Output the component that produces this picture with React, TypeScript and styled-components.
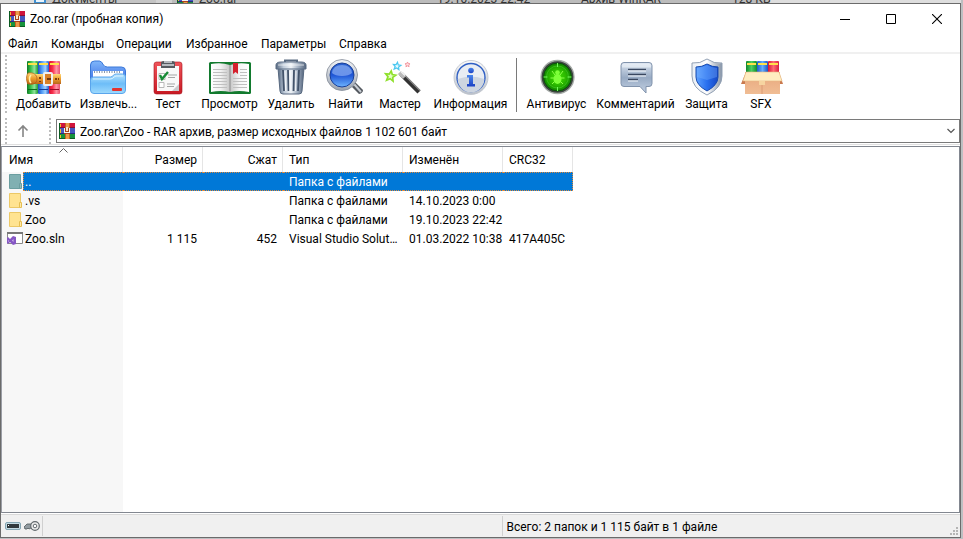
import React from "react";
import styled, { createGlobalStyle } from "styled-components";

const GlobalStyle = createGlobalStyle`
  *, *::before, *::after { box-sizing: border-box; }
  body { margin: 0; }
  body, button, select { font-family: Roboto, "Noto Sans", sans-serif; font-size: 12px; color: #000; }
  button { border: 0; padding: 0; background: transparent; }
  svg { display: block; flex: none; }
`;

const Desktop = styled.div`
  height: 100vh;
  display: flex;
  flex-direction: column;
  padding: 0 2px 1px 0;
  background: #bdbfc1;
`;

const BackStrip = styled.div`
  height: 3px;
  flex: none;
  overflow: hidden;
  display: flex;
  background: linear-gradient(90deg, #dedede 0 34px, #c4c4c4 34px 156px, #d2d2d2 156px 172px, #bcbcbc 172px 770px, #dedede 770px);
`;

const BackText = styled.span<{ $w: number; $pad?: number }>`
  width: ${(p) => p.$w}px;
  padding-left: ${(p) => p.$pad ?? 0}px;
  margin-top: -9px;
  line-height: 16px;
  flex: none;
  display: flex;
  gap: 6px;
  white-space: nowrap;
  color: #333;
`;

const Window = styled.main`
  flex: 1;
  min-height: 0;
  display: flex;
  flex-direction: column;
  border: 1px solid #6b6b6b;
  background: #fff;
`;

const TitleBar = styled.header`
  height: 29px;
  flex: none;
  display: flex;
  align-items: center;
  padding-left: 8px;
`;

const Title = styled.h1`
  flex: 1;
  margin: 0 0 0 5px;
  font-size: 12px;
  font-weight: 400;
`;

const CaptionButton = styled.button`
  width: 46px;
  height: 29px;
  display: flex;
  align-items: center;
  justify-content: center;
`;

const MenuBar = styled.nav`
  height: 21px;
  flex: none;
  display: flex;
  align-items: center;
  padding: 2px 0 0 1px;
  border-bottom: 2px solid #f0f0f0;
`;

const MenuItem = styled.button<{ $w: number }>`
  width: ${(p) => p.$w}px;
  padding-left: 6px;
  text-align: left;
  white-space: nowrap;
`;

const ToolBar = styled.div`
  height: 62px;
  flex: none;
  display: flex;
  align-items: center;
  padding-left: 4px;
`;

const Grip = styled.span<{ $h: number }>`
  width: 2px;
  height: ${(p) => p.$h}px;
  flex: none;
  background: repeating-linear-gradient(#bdbdbd 0 2px, transparent 2px 4px);
`;

const Tools = styled.div`
  display: flex;
  align-items: center;
  margin-left: 4px;
`;

const ToolButton = styled.button<{ $w: number }>`
  width: ${(p) => p.$w}px;
  flex: none;
  display: flex;
  flex-direction: column;
  align-items: center;
  line-height: 16px;
  white-space: nowrap;
`;

const Separator = styled.span`
  width: 1px;
  height: 54px;
  margin: 0 4px 0 2px;
  background: #7a7a7a;
`;

const AddressBar = styled.div`
  height: 29px;
  flex: none;
  display: flex;
  align-items: center;
  padding: 2px 0 0 4px;
  border-bottom: 1px solid #e0e0e0;
`;

const UpButton = styled.button`
  width: 42px;
  height: 24px;
  padding-left: 9px;
  display: flex;
  align-items: center;
`;

const AddressField = styled.label`
  flex: 1;
  height: 24px;
  margin-left: 5px;
  padding: 0 4px 0 2px;
  display: flex;
  align-items: center;
  border: 1px solid #7a7a7a;
`;

const AddressSelect = styled.select`
  flex: 1;
  min-width: 0;
  height: 20px;
  padding: 2px 0 0 5px;
  appearance: none;
  border: 0;
  outline: 0;
  background: transparent;
`;

const FileArea = styled.section`
  flex: 1;
  min-height: 0;
  margin-top: 1px;
  border: 1px solid #828790;
  border-left-color: #9b9ea6;
  background: linear-gradient(90deg, #f7f7f7 121px, #fff 121px);
`;

const Listing = styled.div`
  background: linear-gradient(#fff 25px, transparent 25px);
`;

const FileTable = styled.table`
  width: 571px;
  table-layout: fixed;
  border-collapse: separate;
  border-spacing: 0;
`;

const HeadCell = styled.th<{ $w: number; $right?: boolean }>`
  width: ${(p) => p.$w}px;
  height: 25px;
  padding: 0 5px 0 6px;
  position: relative;
  font-weight: 400;
  text-align: ${(p) => (p.$right ? "right" : "left")};
  border-right: 1px solid #e5e5e5;

  &:first-child { padding-left: 7px; }
`;

const SortMark = styled.svg`
  position: absolute;
  top: 1px;
  left: 57px;
`;

const selected = `
  color: #fff;
  background: #0078d7;
  border: 0 dotted #e08a3c;
  border-width: 1px 0;
  padding-top: 1px;
  padding-bottom: 0;
`;

const Cell = styled.td<{ $right?: boolean; $whole?: boolean; $sel?: boolean }>`
  height: 19px;
  padding: 2px ${(p) => (p.$whole ? 0 : p.$right ? 6 : 4)}px 1px 6px;
  line-height: 16px;
  overflow: ${(p) => (p.$whole ? "visible" : "hidden")};
  white-space: nowrap;
  text-overflow: ellipsis;
  text-align: ${(p) => (p.$right ? "right" : "left")};
  ${(p) => (p.$sel ? selected : "")}
  &:last-child { border-right-width: ${(p) => (p.$sel ? 1 : 0)}px; }
`;

const NameCell = styled.td`
  height: 19px;
  padding: 0;
`;

const NameBox = styled.div`
  display: flex;
  align-items: center;
  padding-left: 4px;
`;

const NameLabel = styled.span<{ $sel?: boolean }>`
  flex: 1;
  height: 19px;
  line-height: 16px;
  padding: 2px 0 1px 2px;
  ${(p) => (p.$sel ? selected + "border-left-width: 1px; padding-left: 1px;" : "")}
`;

const StatusBar = styled.footer`
  height: 24px;
  flex: none;
  display: flex;
  align-items: center;
  background: #f0f0f0;
  border-top: 1px solid #fff;
  box-shadow: inset 0 1px #d9d9d9;
`;

const StatusIcons = styled.div`
  width: 42px;
  height: 20px;
  display: flex;
  align-items: center;
  gap: 3px;
  padding-left: 4px;
  border-right: 1px solid #d0d0d0;
`;

const StatusPane = styled.div`
  flex: 1;
  height: 20px;
  line-height: 22px;
  padding-left: 5px;

  & + & { padding-left: 4px; border-left: 1px solid #d0d0d0; }
`;

const SizeGrip = styled.svg`
  align-self: flex-end;
  margin: 0 2px 2px -10px;
`;

function ArchiveMark() {
  return (
    <svg width="16" height="16" viewBox="0 0 16 16" aria-hidden="true">
      <path fill="#d0143c" d="M0 0h16v5H0z" />
      <path fill="#8a0d35" d="M0 4h16v1H0z" />
      <path fill="#4558c0" d="M0 5h16v6H0z" />
      <path fill="#2b2a80" d="M0 10h16v1H0z" />
      <path fill="#16933c" d="M0 11h16v5H0z" />
      <path fill="#0b5c22" d="M0 15h16v1H0zM0 0h1v16H0z" />
      <path fill="#f1c232" d="M1 1h1v3H1zM1 6h1v4H1zM1 12h1v3H1z" />
      <path fill="#c4641f" d="M6 0h5v16H6z" />
      <path fill="#eb9a4c" d="M7 0h3v16H7z" />
      <path fill="#a8431a" d="M5 5h6v6H5z" />
      <path fill="#f4f4f4" d="M5 5h1v5H5zM10 5h1v5h-1zM6 9h4v1H6z" />
      <path fill="#fbe6c8" d="M7 4h2v4H7z" />
    </svg>
  );
}

const Drawing = ({ children }: { children: React.ReactNode }) => (
  <svg width="48" height="38" viewBox="0 0 48 38" aria-hidden="true">
    {children}
  </svg>
);

type Stops = string[];
const Grad = ({ id, stops, down }: { id: string; stops: Stops; down?: boolean }) => (
  <linearGradient id={id} x1="0" y1="0" x2={down ? 0 : 1} y2={down ? 1 : 0}>
    {stops.map((c, i) => (
      <stop key={i} offset={i / (stops.length - 1)} stopColor={c} />
    ))}
  </linearGradient>
);

const AddIcon = () => (
  <Drawing>
    <defs>
      <Grad id="bkG" stops={["#0f7a25", "#35c04a", "#8fe39a", "#1d9a35"]} />
      <Grad id="bkB" stops={["#1c4fc0", "#4f9af5", "#9fd0ff", "#2458c8"]} />
      <Grad id="bkR" stops={["#d80f32", "#f8304c", "#ff96a8", "#e8506e"]} />
      <Grad id="belt" down stops={["#ffdb7c", "#ec9b2c", "#b8641a"]} />
    </defs>
    <rect x="7" y="3" width="11" height="33" rx="1" fill="url(#bkG)" />
    <rect x="18" y="3" width="11" height="33" rx="1" fill="url(#bkB)" />
    <rect x="29" y="3" width="11" height="33" rx="1" fill="url(#bkR)" />
    <path fill="#ffe14a" d="M8 5h9v2H8zM19 5h9v2h-9zM30 5h9v2h-9z" />
    <path fill="#0b6a1e" d="M8 31h9v1H8z" />
    <path fill="#153c9c" d="M19 31h9v1h-9z" />
    <path fill="#970a28" d="M30 31h9v1h-9z" />
    <path d="M7 16h34v10H7z" fill="url(#belt)" />
    <path d="M8 15c6-1 9 2 9 6s-3 6-9 5c-2-3-2-8 0-11z" fill="url(#belt)" stroke="#a85a12" strokeWidth=".7" />
    <path d="M11 17c-2 2-2 6 0 8" fill="none" stroke="#fff0a8" strokeWidth="1.600" />
    <rect x="24" y="15" width="8" height="12" rx="1" fill="#d98028" stroke="#efefef" strokeWidth="2" />
    <path d="M27 20h4v2h-4z" fill="#6d3410" />
    <path d="M19 19h2v2h-2zM19 23h2v1h-2zM35 20h2v2h-2zM38 20h1v2h-1z" fill="#7a3a10" />
  </Drawing>
);

const ExtractIcon = () => (
  <Drawing>
    <defs>
      <Grad id="fdA" down stops={["#7fb6fa", "#2d5ee0"]} />
      <Grad id="fdB" down stops={["#b4e2fe", "#6dbdf8", "#9edafd"]} />
    </defs>
    <path d="M5.500 7q0-4 4-4h5q2 0 4 4 1 2 4 2h14q4 0 4 4v16h-35z" fill="url(#fdA)" stroke="#3b78d8" />
    <path d="M8 13h30v9H8z" fill="#fff" />
    <path d="M9 14h27" stroke="#8a99ad" strokeWidth="2" strokeDasharray="1 1.5" />
    <path d="M5.500 22q0-3 3-3h17q2 0 3-2 1-1 3-1h6q3 0 3 3v13q0 3.500-3.500 3.500h-28q-3.500 0-3.500-3.500z" fill="url(#fdB)" stroke="#5aa5ec" />
    <path d="M8 21h17q3 0 4-2l2-1h7" stroke="#daf3ff" fill="none" />
    <rect x="27" y="30" width="10" height="3" rx="1" fill="#e5332e" />
  </Drawing>
);

const TestIcon = () => (
  <Drawing>
    <defs>
      <Grad id="cbA" down stops={["#f0545a", "#c81923"]} />
    </defs>
    <rect x="10" y="4" width="28" height="32" rx="2.500" fill="url(#cbA)" stroke="#a6121b" strokeWidth=".6" />
    <path d="M13 8h22v25H13z" fill="#f8f8f8" />
    <path d="M28 33l7-7v7z" fill="#c9c9cc" />
    <path d="M17 5q0-2 3-2h8q3 0 3 2v5H17z" fill="#555a60" />
    <path d="M18 7h12M20 4h8" stroke="#d6dade" strokeWidth="1.600" />
    <path d="M15 15.500h6v6h-6zM15 24.500h5v5h-5z" fill="#fff" stroke="#b8b8b8" />
    <path d="M16 17l2 4 6-7" fill="none" stroke="#168a35" strokeWidth="2.400" />
    <path d="M24 17h9M24 19.500h7M23 26h8M23 28.500h7" stroke="#a5a5a5" />
  </Drawing>
);

const ViewIcon = () => (
  <Drawing>
    <defs>
      <Grad id="pgL" stops={["#ffffff", "#f2f2f2", "#c6c6c6"]} />
      <Grad id="pgR" stops={["#c6c6c6", "#f6f6f6", "#ffffff"]} />
    </defs>
    <rect x="3" y="4" width="42" height="32" rx="1.500" fill="#127a2e" />
    <path d="M5 6q10-2 19 1v27q-9-2-19 0z" fill="url(#pgL)" />
    <path d="M43 6q-10-2-19 1v27q9-2 19 0z" fill="url(#pgR)" />
    <path d="M7 11.500h14M7 14.500h14M7 17.500h14M7 20.500h14M7 23.500h14M7 26.500h14M7 29.500h14M27 20.500h14M27 23.500h14M27 26.500h14M27 29.500h14M34 11.500h7M34 14.500h7M34 17.500h7" stroke="#c0c0c0" />
    <path d="M27 5h5v11l-2.500-2-2.500 2z" fill="#d5202c" />
    <path d="M24 7v27" stroke="#8c8c8c" />
  </Drawing>
);

const DeleteIcon = () => (
  <Drawing>
    <defs>
      <Grad id="trA" stops={["#55677f", "#c0ccda", "#f0f4f8", "#a0aec0", "#54647c"]} />
    </defs>
    <path d="M18 4V2.500h12V4" fill="none" stroke="#596a80" strokeWidth="2" />
    <path d="M11 10h26l-2 23q0 3-3 3H16q-3 0-3-3z" fill="url(#trA)" stroke="#586980" />
    <path d="M16 12l1 21M21 12l.5 21M27 12l-.5 21M32 12l-1 21" stroke="#43536a" strokeWidth="1.800" />
    <path d="M18 13l.7 20M23 13v20M29 13l-.5 20" stroke="#fff" strokeOpacity=".8" />
    <path d="M9 7q0-3 5-3h20q5 0 5 3v4H9z" fill="url(#trA)" stroke="#5a6c84" />
    <path d="M11 7h26" stroke="#fff" strokeOpacity=".7" />
  </Drawing>
);

const FindIcon = () => (
  <Drawing>
    <defs>
      <Grad id="lnA" down stops={["#2a62d0", "#1f55d5", "#6db4ff"]} />
      <Grad id="lnB" down stops={["#f2f4f7", "#9ca4b0"]} />
    </defs>
    <path d="M29 28l4-4 8 8q0 3-4 4z" fill="#53585f" />
    <path d="M30 28l2-2 7 8" stroke="#c9ced4" strokeWidth="2" fill="none" />
    <circle cx="20" cy="17" r="15.500" fill="url(#lnB)" stroke="#848c98" strokeWidth=".8" />
    <circle cx="20" cy="17" r="12" fill="url(#lnA)" stroke="#1a3f96" />
    <path d="M10 15q1-8 10-8t10 8q-3 3-10 3t-10-3z" fill="#b6d2ff" fillOpacity=".5" />
  </Drawing>
);

const star = "M0-6L1.800-2 6-1.800 2.800 1.200 3.800 5.500 0 3.200-3.800 5.500-2.800 1.200-6-1.800-1.800-2z";
const WizardIcon = () => (
  <Drawing>
    <path d="M25 16l18 18" stroke="#333" strokeWidth="4.500" />
    <path d="M26 14.500l18 18" stroke="#888" strokeWidth="1.500" />
    <path d="M23.500 14.500l5 5" stroke="#b9b9b9" strokeWidth="4.500" />
    <path d="M25 13.500l4 4" stroke="#f4f4f4" strokeWidth="1.500" />
    <path d={star} transform="translate(14.500 18) scale(.85) rotate(8)" fill="#e5ffc9" stroke="#8fe02c" strokeWidth="2" />
    <path d={star} transform="translate(21 8) scale(.62) rotate(8)" fill="#e8fbff" stroke="#4cc8f0" strokeWidth="2" />
    <path d={star} transform="translate(31.500 6.500) scale(.42)" fill="#ffe1e1" stroke="#f08a94" strokeWidth="2" />
  </Drawing>
);

const InfoIcon = () => (
  <Drawing>
    <defs>
      <Grad id="inA" down stops={["#fafafa", "#b9c0ca"]} />
      <Grad id="inB" down stops={["#4a86ec", "#1a40c4"]} />
    </defs>
    <circle cx="24" cy="19.500" r="17" fill="url(#inA)" stroke="#bcc2ca" strokeWidth=".8" />
    <circle cx="24" cy="19.500" r="14" fill="#e9edf3" stroke="#2f5fc4" strokeWidth="1.400" />
    <path d="M10.700 21a13.300 13.300 0 0 0 26.600 0q-13-5-26.600 0z" fill="#cdd5e0" />
    <circle cx="24" cy="12.500" r="2.800" fill="url(#inB)" />
    <path d="M20 17h6v9h2v2.500h-8V26h2v-6.500h-2z" fill="url(#inB)" />
  </Drawing>
);

const VirusIcon = () => (
  <Drawing>
    <defs>
      <radialGradient id="avA">
        <stop offset="0" stopColor="#3fe000" />
        <stop offset=".6" stopColor="#2bb800" />
        <stop offset="1" stopColor="#0f8400" />
      </radialGradient>
    </defs>
    <circle cx="24.500" cy="19" r="16.500" fill="#3d4440" stroke="#a6aba8" strokeWidth="1.300" />
    <circle cx="24.500" cy="19" r="14" fill="url(#avA)" stroke="#0b4f0c" />
    <circle cx="24.500" cy="19" r="11" fill="none" stroke="#56e43c" strokeWidth=".6" strokeOpacity=".7" />
    <path d="M24.500 5v4M24.500 29v4M10.500 19h4M34.500 19h4" stroke="#75f859" />
    <path d="M19 13l3 4M30 13l-3 4M17.500 20h4M31.500 20h-4M19 26l3-3M30 26l-3-3" stroke="#8cff4a" />
    <ellipse cx="24.500" cy="21" rx="4" ry="5" fill="#7dff38" />
    <circle cx="24.500" cy="14.500" r="2.300" fill="#7dff38" />
  </Drawing>
);

const CommentIcon = () => (
  <Drawing>
    <defs>
      <Grad id="cmA" down stops={["#dae3ef", "#98abc4", "#c3d1e3"]} />
    </defs>
    <path d="M12 4.500h25q3 0 3 3v18q0 3-3 3h-3v6.500l-6-6.500H12q-3 0-3-3v-18q0-3 3-3z" fill="url(#cmA)" stroke="#8193ac" />
    <path d="M12 5.500h25q2 0 2 2v2H10v-2q0-2 2-2z" fill="#f0f5fa" fillOpacity=".6" />
    <path d="M16 11.500h18M16 16.500h18M16 21.500h10" stroke="#39475f" strokeWidth="1.400" />
    <path d="M16 13h18M16 18h18M16 23h10" stroke="#f3f7fb" />
  </Drawing>
);

const ShieldIcon = () => (
  <Drawing>
    <defs>
      <Grad id="shA" stops={["#e9eef4", "#ffffff", "#8694a7"]} />
      <Grad id="shB" stops={["#5fa2ff", "#2970ef", "#1647c6"]} />
    </defs>
    <path d="M24 1q7 5 15 4v13q0 12-15 19Q9 30 9 18V5q8 1 15-4z" fill="url(#shA)" stroke="#91a0b4" />
    <path d="M24 6q5 3 11 3v10q0 8-11 14Q13 27 13 19V9q6 0 11-3z" fill="url(#shB)" stroke="#174aae" />
    <path d="M24 7q5 3 10 3v9l-10 3-10-3v-9q5 0 10-3z" fill="#7db7ff" fillOpacity=".35" />
  </Drawing>
);

const SfxIcon = () => (
  <Drawing>
    <defs>
      <Grad id="sxG" stops={["#11862a", "#4bd062", "#128b2d"]} />
      <Grad id="sxB" stops={["#1d5cc8", "#65aeff", "#1c55c0"]} />
      <Grad id="sxR" stops={["#d8143a", "#ff6b72", "#d81f40"]} />
      <Grad id="bxA" down stops={["#e8a67c", "#f0bd94"]} />
    </defs>
    <rect x="9" y="3" width="11" height="14" rx="1" fill="url(#sxG)" />
    <rect x="20" y="3" width="11" height="14" rx="1" fill="url(#sxB)" />
    <rect x="31" y="3" width="11" height="14" rx="1" fill="url(#sxR)" />
    <path d="M10 5h9v2h-9zM21 5h9v2h-9zM32 5h9v2h-9z" fill="#ffe14a" />
    <path d="M9 14l-5 12h5zM42 14l4 12h-4z" fill="#c9794e" />
    <path d="M8 14h35v22H8z" fill="url(#bxA)" />
    <path d="M9 14h33l3 9H6z" fill="#ffecc0" stroke="#e6ba85" strokeWidth=".6" />
    <path d="M25 24v12" stroke="#dc9c74" />
    <path d="M22 23h6v4h-6z" fill="#f6d4a0" />
  </Drawing>
);

const FolderMark = ({ teal }: { teal?: boolean }) => (
  <svg width="17" height="17" viewBox="0 0 17 17" aria-hidden="true">
    <path d="M3.500 1.500h11v14h-11z" fill={teal ? "#80b0b2" : "#ffe391"} stroke={teal ? "#6b9ea0" : "#ecc866"} />
    <path d="M13.500 10.500h2v5h-2z" fill={teal ? "#8cbcbe" : "#ffe9a8"} stroke={teal ? "#6b9ea0" : "#e6be52"} />
  </svg>
);

const SolutionMark = () => (
  <svg width="17" height="17" viewBox="0 0 17 17" aria-hidden="true">
    <path d="M1.500 2.500h15v11h-15z" fill="#fff" stroke="#8a8a8a" />
    <path d="M1 2h16v2H1z" fill="#777" />
    <path d="M1 8l1-1 2 2 3-3 3 1v7l-3 1-3-3-2 2-1-1z" fill="#8657c5" />
    <path d="M2 10v2l1-1zM7.500 9v3L6 10.500z" fill="#fff" fillOpacity=".6" />
  </svg>
);

const menu = [
  { label: "Файл", w: 43 },
  { label: "Команды", w: 65 },
  { label: "Операции", w: 70 },
  { label: "Избранное", w: 75 },
  { label: "Параметры", w: 78 },
  { label: "Справка", w: 60 },
];

const archiveTools = [
  { label: "Добавить", w: 65, Icon: AddIcon },
  { label: "Извлечь...", w: 65, Icon: ExtractIcon },
  { label: "Тест", w: 54, Icon: TestIcon },
  { label: "Просмотр", w: 69, Icon: ViewIcon },
  { label: "Удалить", w: 54, Icon: DeleteIcon },
  { label: "Найти", w: 55, Icon: FindIcon },
  { label: "Мастер", w: 54, Icon: WizardIcon },
  { label: "Информация", w: 87, Icon: InfoIcon },
];

const extraTools = [
  { label: "Антивирус", w: 71, Icon: VirusIcon },
  { label: "Комментарий", w: 87, Icon: CommentIcon },
  { label: "Защита", w: 55, Icon: ShieldIcon },
  { label: "SFX", w: 54, Icon: SfxIcon },
];

const files = [
  { name: "..", size: "", packed: "", type: "Папка с файлами", date: "", crc: "", icon: <FolderMark teal />, sel: true },
  { name: ".vs", size: "", packed: "", type: "Папка с файлами", date: "14.10.2023 0:00", crc: "", icon: <FolderMark /> },
  { name: "Zoo", size: "", packed: "", type: "Папка с файлами", date: "19.10.2023 22:42", crc: "", icon: <FolderMark /> },
  { name: "Zoo.sln", size: "1 115", packed: "452", type: "Visual Studio Solution", date: "01.03.2022 10:38", crc: "417A405C", icon: <SolutionMark /> },
];

const ToolSet = ({ items }: { items: typeof archiveTools }) => (
  <>
    {items.map(({ label, w, Icon }) => (
      <ToolButton key={label} $w={w}>
        <Icon />
        {label}
      </ToolButton>
    ))}
  </>
);

export default function App() {
  return (
    <Desktop>
      <GlobalStyle />
      <BackStrip aria-hidden="true">
        <BackText $w={177} $pad={34}>
          <svg width="12" height="14" viewBox="0 0 12 14"><path d="M0 0h12v13H0z" fill="#3f8fd0" /><path d="M2 2h8v9H2z" fill="#e8f3fb" /></svg>
          Документы
        </BackText>
        <BackText $w={260}><ArchiveMark />Zoo.rar</BackText>
        <BackText $w={144}>19.10.2023 22:42</BackText>
        <BackText $w={151}>Архив WinRAR</BackText>
        <BackText $w={60}>128 КБ</BackText>
      </BackStrip>
      <Window>
        <TitleBar>
          <ArchiveMark />
          <Title>Zoo.rar (пробная копия)</Title>
          <CaptionButton aria-label="Свернуть">
            <svg width="10" height="10" viewBox="0 0 10 10"><path d="M0 5.500h10" stroke="#000" /></svg>
          </CaptionButton>
          <CaptionButton aria-label="Развернуть">
            <svg width="10" height="10" viewBox="0 0 10 10"><path d="M.5.5h9v9h-9z" fill="none" stroke="#000" /></svg>
          </CaptionButton>
          <CaptionButton aria-label="Закрыть">
            <svg width="10" height="10" viewBox="0 0 10 10"><path d="M0 0l10 10M10 0L0 10" stroke="#000" strokeWidth="1.100" /></svg>
          </CaptionButton>
        </TitleBar>
        <MenuBar>
          {menu.map((m) => <MenuItem key={m.label} $w={m.w}>{m.label}</MenuItem>)}
        </MenuBar>
        <ToolBar>
          <Grip $h={60} />
          <Tools>
            <ToolSet items={archiveTools} />
            <Separator />
            <ToolSet items={extraTools} />
          </Tools>
        </ToolBar>
        <AddressBar>
          <Grip $h={26} />
          <UpButton aria-label="На уровень вверх">
            <svg width="14" height="14" viewBox="0 0 14 14"><path d="M7 13V2M2.500 6.500L7 2l4.500 4.500" fill="none" stroke="#858585" strokeWidth="1.600" /></svg>
          </UpButton>
          <Grip $h={26} />
          <AddressField>
            <ArchiveMark />
            <AddressSelect aria-label="Путь">
              <option>Zoo.rar\Zoo - RAR архив, размер исходных файлов 1 102 601 байт</option>
            </AddressSelect>
            <svg width="8" height="6" viewBox="0 0 8 6"><path d="M.5 1L4 4.500 7.500 1" fill="none" stroke="#555" strokeWidth="1.200" /></svg>
          </AddressField>
        </AddressBar>
        <FileArea>
          <Listing>
            <FileTable>
              <thead>
                <tr>
                  <HeadCell $w={121}>
                    Имя
                    <SortMark width="9" height="5" viewBox="0 0 9 5"><path d="M.5 4.500l4-4 4 4" fill="none" stroke="#666" /></SortMark>
                  </HeadCell>
                  <HeadCell $w={80} $right>Размер</HeadCell>
                  <HeadCell $w={80} $right>Сжат</HeadCell>
                  <HeadCell $w={120}>Тип</HeadCell>
                  <HeadCell $w={100}>Изменён</HeadCell>
                  <HeadCell $w={70}>CRC32</HeadCell>
                </tr>
              </thead>
              <tbody>
                {files.map((f) => (
                  <tr key={f.name}>
                    <NameCell>
                      <NameBox>{f.icon}<NameLabel $sel={f.sel}>{f.name}</NameLabel></NameBox>
                    </NameCell>
                    <Cell $right $sel={f.sel}>{f.size}</Cell>
                    <Cell $right $sel={f.sel}>{f.packed}</Cell>
                    <Cell $sel={f.sel}>{f.type}</Cell>
                    <Cell $whole $sel={f.sel}>{f.date}</Cell>
                    <Cell $sel={f.sel}>{f.crc}</Cell>
                  </tr>
                ))}
              </tbody>
            </FileTable>
          </Listing>
        </FileArea>
        <StatusBar>
          <StatusIcons>
            <svg width="16" height="16" viewBox="0 0 16 16" aria-hidden="true">
              <rect x=".5" y="4.500" width="15" height="7" rx="1.500" fill="#c4dbe4" stroke="#84a5b3" />
              <path d="M2 6h12v4H2z" fill="#30383d" />
              <path d="M3 7h1v1H3z" fill="#fff" />
            </svg>
            <svg width="16" height="16" viewBox="0 0 16 16" aria-hidden="true">
              <path d="M8 6H3L0 9l1 2h2l1-1 1 1 2-1h2z" fill="#929ba0" stroke="#4d5559" strokeWidth=".8" />
              <circle cx="11" cy="8" r="4.300" fill="#ececec" stroke="#62696d" strokeWidth="1.200" />
              <circle cx="11" cy="8" r="1.800" fill="#fff" stroke="#62696d" />
            </svg>
          </StatusIcons>
          <StatusPane />
          <StatusPane>Всего: 2 папок и 1 115 байт в 1 файле</StatusPane>
          <SizeGrip width="8" height="8" viewBox="0 0 8 8" aria-hidden="true">
            <path d="M6 0h2v2H6zM3 3h2v2H3zM6 3h2v2H6zM0 6h2v2H0zM3 6h2v2H3zM6 6h2v2H6z" fill="#b5b5b5" />
          </SizeGrip>
        </StatusBar>
      </Window>
    </Desktop>
  );
}
